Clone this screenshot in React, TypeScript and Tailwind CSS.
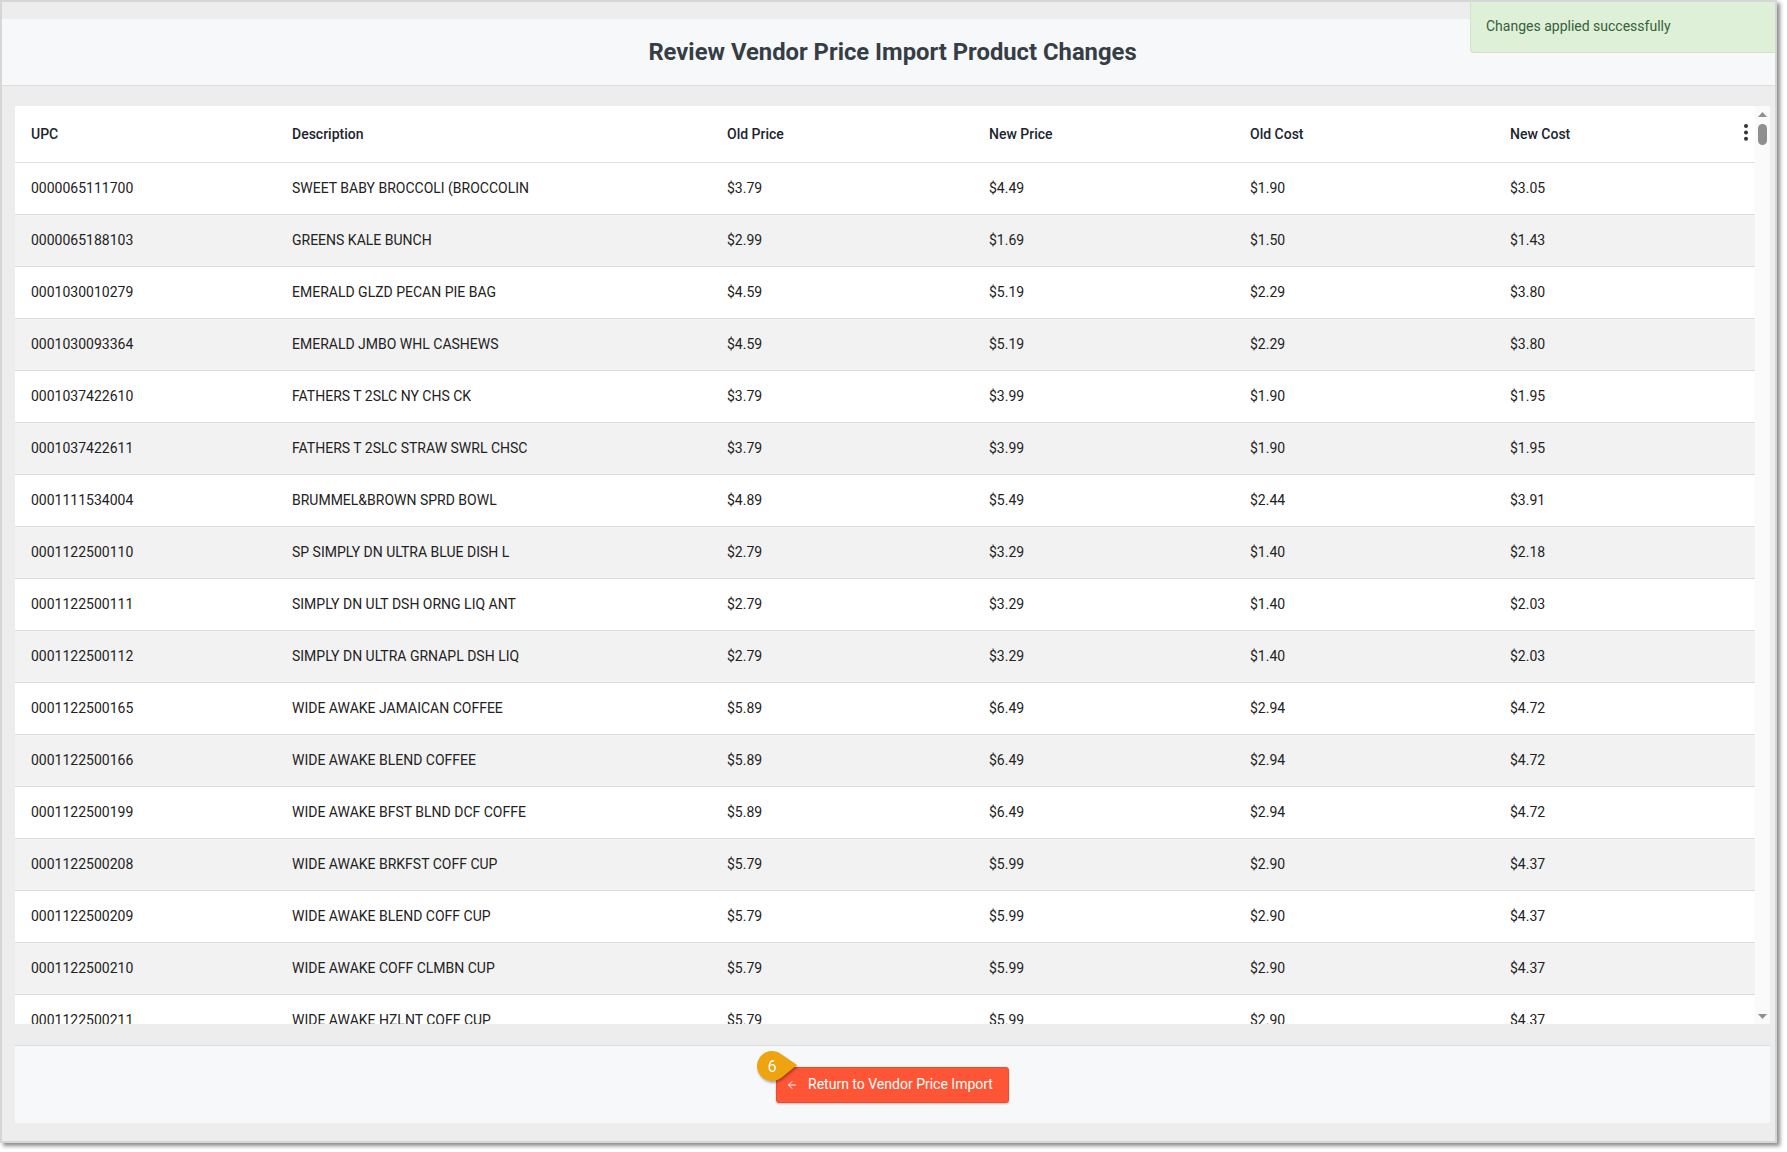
import React from "react";
import { ArrowLeft } from "lucide-react";

const rows: string[][] = [
  ["0000065111700", "SWEET BABY BROCCOLI (BROCCOLIN", "$3.79", "$4.49", "$1.90", "$3.05"],
  ["0000065188103", "GREENS KALE BUNCH", "$2.99", "$1.69", "$1.50", "$1.43"],
  ["0001030010279", "EMERALD GLZD PECAN PIE BAG", "$4.59", "$5.19", "$2.29", "$3.80"],
  ["0001030093364", "EMERALD JMBO WHL CASHEWS", "$4.59", "$5.19", "$2.29", "$3.80"],
  ["0001037422610", "FATHERS T 2SLC NY CHS CK", "$3.79", "$3.99", "$1.90", "$1.95"],
  ["0001037422611", "FATHERS T 2SLC STRAW SWRL CHSC", "$3.79", "$3.99", "$1.90", "$1.95"],
  ["0001111534004", "BRUMMEL&BROWN SPRD BOWL", "$4.89", "$5.49", "$2.44", "$3.91"],
  ["0001122500110", "SP SIMPLY DN ULTRA BLUE DISH L", "$2.79", "$3.29", "$1.40", "$2.18"],
  ["0001122500111", "SIMPLY DN ULT DSH ORNG LIQ ANT", "$2.79", "$3.29", "$1.40", "$2.03"],
  ["0001122500112", "SIMPLY DN ULTRA GRNAPL DSH LIQ", "$2.79", "$3.29", "$1.40", "$2.03"],
  ["0001122500165", "WIDE AWAKE JAMAICAN COFFEE", "$5.89", "$6.49", "$2.94", "$4.72"],
  ["0001122500166", "WIDE AWAKE BLEND COFFEE", "$5.89", "$6.49", "$2.94", "$4.72"],
  ["0001122500199", "WIDE AWAKE BFST BLND DCF COFFE", "$5.89", "$6.49", "$2.94", "$4.72"],
  ["0001122500208", "WIDE AWAKE BRKFST COFF CUP", "$5.79", "$5.99", "$2.90", "$4.37"],
  ["0001122500209", "WIDE AWAKE BLEND COFF CUP", "$5.79", "$5.99", "$2.90", "$4.37"],
  ["0001122500210", "WIDE AWAKE COFF CLMBN CUP", "$5.79", "$5.99", "$2.90", "$4.37"],
  ["0001122500211", "WIDE AWAKE HZLNT COFF CUP", "$5.79", "$5.99", "$2.90", "$4.37"],
];

const headers = ["UPC", "Description", "Old Price", "New Price", "Old Cost", "New Cost"];

export default function App() {
  return (
    <div className="w-[1787px] h-[1152px] bg-white font-['Roboto',sans-serif]">
      <div className="relative w-[1777px] h-[1143px] border-2 border-[#d6d6d6] bg-[#ecedec] shadow-[3px_3px_4px_rgba(0,0,0,0.45)] flex flex-col">
        <div className="h-[17px]" />
        <div className="h-[67px] bg-[#f7f8fa] border-b border-[#dcdde0] flex items-center justify-center pl-[13px] pr-[5px] pt-[2px]">
          <h1 className="text-[23.8px] font-bold text-[#353d45] leading-none">
            Review Vendor Price Import Product Changes
          </h1>
        </div>
        <div className="h-[20px]" />
        <div className="ml-[13px] mr-[5px] h-[918px] bg-white flex">
          <div className="flex-1 overflow-hidden relative">
            <div className="grid grid-cols-[261px_435px_262px_261px_260px_1fr] h-[57px] border-b border-[#e0e0e0] items-center">
              {headers.map((h) => (
                <div key={h} className="pl-[16px] text-[14px] font-medium text-[#1b2430]">
                  {h}
                </div>
              ))}
            </div>
            <svg className="absolute right-[7px] top-[18px]" width="4" height="17" viewBox="0 0 4 17">
              <circle cx="2" cy="2" r="2" fill="#333" />
              <circle cx="2" cy="8.4" r="2" fill="#333" />
              <circle cx="2" cy="14.8" r="2" fill="#333" />
            </svg>
            {rows.map((r, i) => (
              <div
                key={r[0]}
                className={
                  "grid grid-cols-[261px_435px_262px_261px_260px_1fr] h-[52px] border-b border-[#dedede] items-center " +
                  (i % 2 === 1 ? "bg-[#f2f2f2]" : "bg-white")
                }
              >
                {r.map((c, j) => (
                  <div key={j} className="pl-[16px] text-[14px] text-[#222222] whitespace-nowrap">
                    {c}
                  </div>
                ))}
              </div>
            ))}
          </div>
          <div className="w-[15px] bg-[#fafafa] relative">
            <svg className="absolute left-[3px] top-[6px]" width="9" height="5" viewBox="0 0 9 5">
              <polygon points="4.5,0 9,5 0,5" fill="#8f8f8f" />
            </svg>
            <div className="absolute left-[3px] top-[18px] w-[9px] h-[21px] rounded-full bg-[#8f8f8f]" />
            <svg className="absolute left-[3px] bottom-[5px]" width="9" height="5" viewBox="0 0 9 5">
              <polygon points="0,0 9,0 4.5,5" fill="#8f8f8f" />
            </svg>
          </div>
        </div>
        <div className="h-[21px]" />
        <div className="ml-[13px] mr-[5px] h-[78px] border-t border-[#dcdde0] bg-[#f7f8fa] flex items-center justify-center">
          <div className="relative">
            <button className="h-[36px] flex items-center pl-[9px] pr-[15px] gap-[10px] bg-[#fd5535] border border-[#ef4a2b] rounded-[3px] text-white text-[14px] shadow-[0_1px_2px_rgba(0,0,0,0.25)]">
              <ArrowLeft size={12} strokeWidth={2} />
              <span>Return to Vendor Price Import</span>
            </button>
            <svg
              className="absolute left-[-20px] top-[-17px] drop-shadow-[1px_2px_1px_rgba(0,0,0,0.3)]"
              width="44"
              height="34"
              viewBox="0 0 44 34"
            >
              <path d="M41 15 L25 4 A15 15 0 1 0 25 28 Z" fill="#eda40f" />
              <text
                x="16"
                y="21.5"
                textAnchor="middle"
                fill="#ffffff"
                fontSize="16"
                fontFamily="Roboto, sans-serif"
              >
                6
              </text>
            </svg>
          </div>
        </div>
        <div className="h-[18px]" />
        <div className="absolute top-0 right-0 w-[305px] h-[51px] bg-[#dff0d8] border-l border-b border-[#cde5c0] rounded-bl-[4px] pl-[15px] pt-[14px]">
          <span className="text-[14px] leading-[20px] text-[#35603a] block">Changes applied successfully</span>
        </div>
      </div>
    </div>
  );
}
